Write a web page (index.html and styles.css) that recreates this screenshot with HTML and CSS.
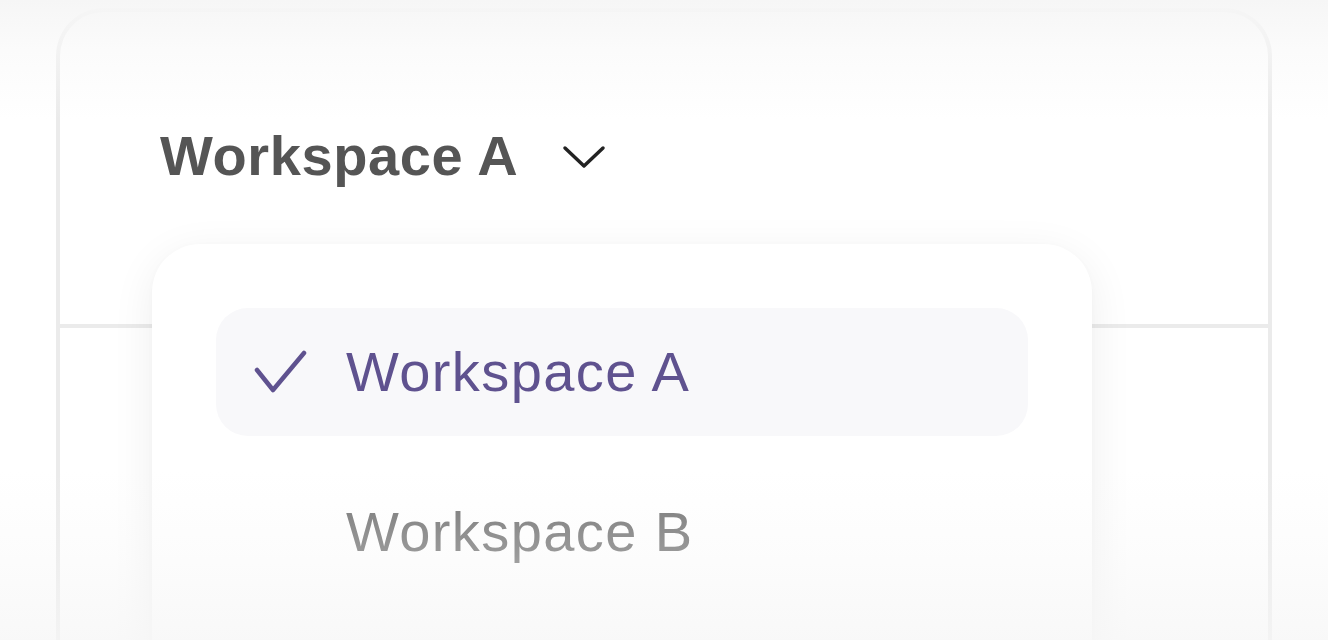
FILE: index.html
```html
<!DOCTYPE html>
<html lang="en">
<head>
<meta charset="utf-8">
<title>Workspace switcher</title>
<link rel="stylesheet" href="styles.css">
</head>
<body>
<div class="page">
  <div class="card">
    <div class="card-header">
      <button class="switcher" type="button">
        <span class="switcher-label">Workspace A</span>
        <svg class="chevron" width="48" height="28" viewBox="0 0 48 28" aria-hidden="true">
          <path d="M5 6 L24 24 L43 6" fill="none" stroke="#222" stroke-width="3.5" stroke-linecap="round" stroke-linejoin="round"/>
        </svg>
      </button>
    </div>
    <div class="menu">
      <div class="menu-item is-selected">
        <svg class="check" width="56" height="48" viewBox="0 0 56 48" aria-hidden="true">
          <path d="M5 22 L21 42 L52 5" fill="none" stroke="currentColor" stroke-width="4.5" stroke-linecap="round" stroke-linejoin="round"/>
        </svg>
        <span class="item-label">Workspace A</span>
      </div>
      <div class="menu-item">
        <span class="check-spacer"></span>
        <span class="item-label">Workspace B</span>
      </div>
    </div>
  </div>
  <div class="fade fade-top"></div>
  <div class="fade fade-bottom"></div>
</div>
</body>
</html>
```

FILE: styles.css
```css
html, body {
  margin: 0;
  padding: 0;
  background: #ffffff;
}

body {
  font-family: "Liberation Sans", Arial, Helvetica, sans-serif;
}

.page {
  position: relative;
  width: 1328px;
  height: 640px;
  overflow: hidden;
  padding: 8px 56px 0;
  box-sizing: border-box;
}

.card {
  position: relative;
  height: 760px;
  border: 4px solid #ebebeb;
  border-bottom: none;
  border-radius: 48px 48px 0 0;
  background: #ffffff;
}

.card-header {
  height: 196px;
  padding: 116px 0 0 100px;
  border-bottom: 4px solid #ebebeb;
}

.switcher {
  display: flex;
  align-items: center;
  gap: 42px;
  margin: 0;
  padding: 0;
  border: none;
  background: none;
  font: inherit;
  cursor: pointer;
}

.switcher-label {
  font-size: 56px;
  line-height: 56px;
  font-weight: 700;
  letter-spacing: 0.6px;
  color: #555555;
}

.chevron {
  display: block;
}

.menu {
  position: absolute;
  left: 92px;
  top: 232px;
  width: 940px;
  height: 600px;
  box-sizing: border-box;
  padding: 64px 64px;
  display: flex;
  flex-direction: column;
  gap: 32px;
  background: #ffffff;
  border-radius: 48px;
  box-shadow: 0 10px 44px rgba(0, 0, 0, 0.07), 0 1px 6px rgba(0, 0, 0, 0.02);
}

.menu-item {
  height: 128px;
  display: flex;
  align-items: center;
  gap: 38px;
  padding-left: 36px;
  border-radius: 32px;
  color: #727272;
}

.menu-item.is-selected {
  background: #f8f8fa;
  color: #5f528f;
}

.check {
  display: block;
  flex: none;
}

.check-spacer {
  display: block;
  width: 56px;
  height: 48px;
  flex: none;
}

.item-label {
  font-size: 56px;
  line-height: 56px;
  font-weight: 400;
  letter-spacing: 1.4px;
}

.fade {
  position: absolute;
  left: 0;
  right: 0;
  pointer-events: none;
}

.fade-top {
  top: 0;
  height: 120px;
  background: linear-gradient(to bottom, rgba(246, 246, 246, 1) 0%, rgba(248, 248, 248, 0.6) 40%, rgba(255, 255, 255, 0) 100%);
}

.fade-bottom {
  bottom: 0;
  height: 170px;
  background: linear-gradient(to bottom, rgba(246, 246, 246, 0) 0%, rgba(246, 246, 246, 0.3) 50%, rgba(246, 246, 246, 0.75) 100%);
}
```
